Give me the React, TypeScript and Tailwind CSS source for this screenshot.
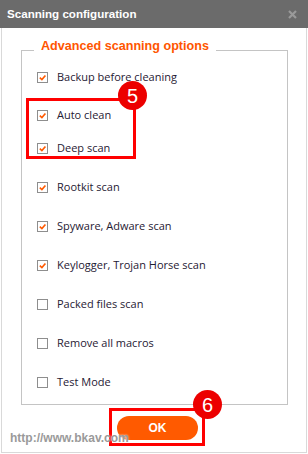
const options = [
  { label: "Backup before cleaning", checked: true, gap: "" },
  { label: "Auto clean", checked: true, gap: "mt-[18px]" },
  { label: "Deep scan", checked: true, gap: "mt-[13px]" },
  { label: "Rootkit scan", checked: true, gap: "mt-[19px]" },
  { label: "Spyware, Adware scan", checked: true, gap: "mt-[19px]" },
  { label: "Keylogger, Trojan Horse scan", checked: true, gap: "mt-[19px]" },
  { label: "Packed files scan", checked: false, gap: "mt-[19px]" },
  { label: "Remove all macros", checked: false, gap: "mt-[19px]" },
  { label: "Test Mode", checked: false, gap: "mt-[19px]" },
];

const Check = ({ on }: { on: boolean }) => (
  <span className="w-[11px] h-[11px] border border-[#8e8e8e] bg-white flex items-center justify-center shrink-0">
    {on && (
      <svg width="9" height="9" viewBox="0 0 9 9">
        <path d="M1.8 4.6 L3.9 6.6 L7.4 2.4" fill="none" stroke="#ff5a00" strokeWidth="1.6" />
      </svg>
    )}
  </span>
);

const Badge = ({ n, pos }: { n: string; pos: string }) => (
  <div
    className={`absolute w-[29px] h-[29px] rounded-full bg-[#ec0000] text-white flex items-center justify-center text-[20px] leading-none font-['Liberation_Sans',sans-serif] ${pos}`}
  >
    {n}
  </div>
);

export default function App() {
  return (
    <div className="relative w-[308px] h-[454px] bg-white overflow-hidden font-['Open_Sans',sans-serif]">
      <div className="h-[28px] bg-[#6b6b6b] flex items-center justify-between pl-[7px] pr-[11px]">
        <span className="text-white font-bold text-[11.6px] font-['Liberation_Sans',sans-serif]">
          Scanning configuration
        </span>
        <svg width="9" height="9" viewBox="0 0 9 9">
          <path d="M1 1 L8 8 M8 1 L1 8" stroke="#9a9a9a" strokeWidth="2.2" />
        </svg>
      </div>

      <div className="mx-[1px] h-[425px] border-x border-b border-[#d9d9d9] flex flex-col">
        <fieldset className="ml-[19px] mt-[10px] w-[267px] border border-[#c4c4c4]">
          <legend className="ml-[12px] px-[7px] pb-[8px] leading-[16px] text-[12.6px] font-bold text-[#ff5500] font-['Liberation_Sans',sans-serif]">
            Advanced scanning options
          </legend>
          <div className="flex flex-col pl-[15px] pt-[5px] pb-[12px]">
            {options.map((o) => (
              <label key={o.label} className={`h-[20px] flex items-center gap-[9px] ${o.gap}`}>
                <Check on={o.checked} />
                <span className="text-[11px] text-[#1f2033]">{o.label}</span>
              </label>
            ))}
          </div>
        </fieldset>

        <button className="self-start ml-[115px] mt-[11px] w-[81px] h-[24px] rounded-full bg-[#ff5a00] text-white font-bold text-[12px] font-['Liberation_Sans',sans-serif]">
          OK
        </button>
      </div>

      <div className="absolute left-[26px] top-[98px] w-[110px] h-[61px] border-[3px] border-[#ff0000]" />
      <Badge n="5" pos="left-[118px] top-[81px]" />

      <div className="absolute left-[109px] top-[408px] w-[96px] h-[38px] border-[3px] border-[#ff0000]" />
      <Badge n="6" pos="left-[193px] top-[390px]" />

      <span className="absolute left-[10px] top-[431px] leading-[14px] text-[12px] font-bold text-[#9a9a9a] font-['Liberation_Sans',sans-serif] [text-shadow:0_0_2px_#fff]">
        http://www.bkav.com
      </span>
    </div>
  );
}
